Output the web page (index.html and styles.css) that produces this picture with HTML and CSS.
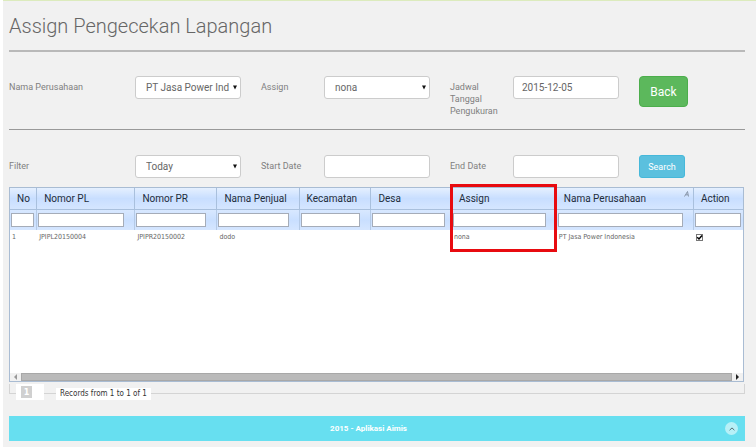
FILE: index.html
```html
<!DOCTYPE html>
<html lang="id">
<head>
<meta charset="utf-8">
<title>Assign Pengecekan Lapangan</title>
<link rel="stylesheet" href="styles.css">
</head>
<body>
<main class="page">
  <h1 class="title">Assign Pengecekan Lapangan</h1>

  <form class="fields assignment">
    <label for="company">Nama Perusahaan</label>
    <div class="select-box">
      <select class="control" id="company"><option>PT Jasa Power Ind</option></select>
      <svg class="caret" viewBox="0 0 5 5" aria-hidden="true"><path d="M0 0h5L2.500 5z"/></svg>
    </div>
    <label for="assign">Assign</label>
    <div class="select-box">
      <select class="control" id="assign"><option>nona</option></select>
      <svg class="caret" viewBox="0 0 5 5" aria-hidden="true"><path d="M0 0h5L2.500 5z"/></svg>
    </div>
    <label for="schedule">Jadwal Tanggal Pengukuran</label>
    <input class="control" id="schedule" type="text" value="2015-12-05">
    <button class="button back" type="button">Back</button>
  </form>

  <form class="fields filter">
    <label for="filter">Filter</label>
    <div class="select-box">
      <select class="control" id="filter"><option>Today</option></select>
      <svg class="caret" viewBox="0 0 5 5" aria-hidden="true"><path d="M0 0h5L2.500 5z"/></svg>
    </div>
    <label for="start">Start Date</label>
    <input class="control" id="start" type="text">
    <label for="end">End Date</label>
    <input class="control" id="end" type="text">
    <button class="button search" type="button">Search</button>
  </form>

  <section class="grid">
    <div class="grid-body">
      <table class="records">
        <colgroup>
          <col class="c-no"><col class="c-pl"><col class="c-pr"><col class="c-seller"><col class="c-district"><col class="c-village"><col class="c-assign"><col class="c-company"><col class="c-action">
        </colgroup>
        <thead>
          <tr class="heads">
            <th>No</th><th>Nomor PL</th><th>Nomor PR</th><th>Nama Penjual</th><th>Kecamatan</th><th>Desa</th>
            <th>Assign<span class="highlight"></span></th>
            <th>Nama Perusahaan<svg class="sort" viewBox="0 0 5 6" aria-hidden="true"><path d="M.5 5.500L3.500 .5l1 5M1.800 3.800H4"/></svg></th>
            <th>Action</th>
          </tr>
          <tr class="searches">
            <td><input type="text" aria-label="No"></td>
            <td><input type="text" aria-label="Nomor PL"></td>
            <td><input type="text" aria-label="Nomor PR"></td>
            <td><input type="text" aria-label="Nama Penjual"></td>
            <td><input type="text" aria-label="Kecamatan"></td>
            <td><input type="text" aria-label="Desa"></td>
            <td><input type="text" aria-label="Assign"></td>
            <td><input type="text" aria-label="Nama Perusahaan"></td>
            <td><input type="text" aria-label="Action"></td>
          </tr>
        </thead>
        <tbody>
          <tr>
            <td>1</td><td>JPIPL20150004</td><td>JPIPR20150002</td><td>dodo</td><td></td><td></td><td>nona</td><td>PT Jasa Power Indonesia</td>
            <td><label class="check"><input type="checkbox" checked aria-label="Action 1"><svg viewBox="0 0 7 7" aria-hidden="true"><path d="M1.200 3.200L3 5l3-3.500"/></svg></label></td>
          </tr>
        </tbody>
      </table>
    </div>
    <div class="scrollbar">
      <svg class="arrow dim" viewBox="0 0 3 6" aria-hidden="true"><path d="M3 0v6L0 3z"/></svg>
      <span class="thumb"></span>
      <svg class="arrow" viewBox="0 0 3 6" aria-hidden="true"><path d="M0 0v6l3-3z"/></svg>
    </div>
  </section>

  <div class="pager">
    <span class="rule start"></span>
    <span class="pages"><span class="current">1</span></span>
    <span class="rule middle"></span>
    <span class="summary">Records from 1 to 1 of 1</span>
    <span class="rule end"></span>
  </div>

  <footer class="footer">
    <span class="credit">2015 - Aplikasi Aimis</span>
    <a class="to-top" href="#" aria-label="Top"><svg viewBox="0 0 6 4"><path d="M.6 3.200L3 .9l2.400 2.300"/></svg></a>
  </footer>
</main>
</body>
</html>
```

FILE: styles.css
```css
* {
  box-sizing: border-box;
}

body {
  margin: 0;
  padding-left: 3px;
  background: #fff;
  color: #808080;
  font-family: Roboto, "Open Sans", sans-serif;
  font-size: 9px;
  line-height: 12px;
}

input,
select,
button {
  font: inherit;
  color: inherit;
}

.page {
  display: flex;
  flex-direction: column;
  min-height: 100vh;
  padding: 0 11px 6px 6px;
  border-top: 1px solid #dcebbd;
  background: #f1f1f1;
}

.title {
  margin: 0;
  padding: 11px 0 10px;
  border-bottom: 2px solid #b9b9b9;
  color: #666;
  font-size: 20px;
  font-weight: 300;
  line-height: 28px;
}

/* Form rows */
.fields {
  display: grid;
  grid-template-columns: 126fr 126fr 63fr 126fr 63fr 126fr 106fr;
  align-items: start;
}

.fields > label {
  padding: 5px 10px 0 0;
}

.assignment {
  padding: 24px 0 12px;
  border-bottom: 1px solid #999;
}

.filter {
  padding: 25px 0 9px;
}

.select-box,
.fields > input {
  margin-right: 20px;
}

.select-box {
  display: grid;
  align-items: center;
}

.select-box > * {
  grid-area: 1 / 1;
}

.control {
  width: 100%;
  height: 23px;
  padding: 0 8px;
  border: 1px solid #ccc;
  border-radius: 3px;
  background: #fff;
  color: #666;
  font-size: 10px;
}

.fields > .control {
  width: auto;
  min-width: 0;
}

select.control {
  padding: 0 10px;
  appearance: none;
}

.caret {
  justify-self: end;
  width: 4px;
  height: 5px;
  margin-right: 4px;
  fill: #111;
  pointer-events: none;
}

.button {
  justify-self: start;
  border: 1px solid;
  border-radius: 3px;
  color: #fff;
}

.back {
  width: 49px;
  height: 31px;
  border-color: #4cae4c;
  border-radius: 4px;
  background: #5cb85c;
  font-size: 12px;
}

.search {
  width: 46px;
  height: 23px;
  padding: 0;
  border-color: #46b8da;
  background: #5bc0de;
  font-size: 9px;
}

/* Record grid */
.grid {
  display: flex;
  flex: 1;
  flex-direction: column;
  margin-right: 1px;
  border: 1px solid #a9bcd3;
  background: #fff;
}

.grid-body {
  flex: 1;
}

.records {
  width: 100%;
  border-collapse: separate;
  border-spacing: 0;
  table-layout: fixed;
  font-family: "DejaVu Sans Condensed", "DejaVu Sans", sans-serif;
  font-size: 7px;
}

.c-no { width: 26px; }
.c-pl { width: 13.400%; }
.c-pr { width: 11.200%; }
.c-seller { width: 11.200%; }
.c-district { width: 9.800%; }
.c-village { width: 11%; }
.c-assign { width: 14.300%; }
.c-company { width: 18.700%; }
.c-action { width: 6.700%; }

.heads th {
  position: relative;
  height: 22px;
  padding: 0 0 0 7px;
  border-right: 1px solid #a9c0dd;
  border-bottom: 1px solid #a9c0dd;
  background: linear-gradient(#e5f0ff, #c8deff 50%, #d5e6ff);
  color: #222c3a;
  font-family: Roboto, sans-serif;
  font-size: 10px;
  font-weight: 400;
  text-align: left;
  white-space: nowrap;
}

.searches td {
  height: 20px;
  padding: 0 10px 0 1px;
  border-right: 1px solid #b5cae6;
  background: linear-gradient(#d8e8ff, #c9dfff 50%, #d5e6ff);
}

.searches td:nth-child(6) {
  padding-right: 6px;
}

.searches td:first-child,
.searches td:last-child {
  padding-right: 2px;
}

.heads th:last-child,
.searches td:last-child {
  border-right: 0;
}

.searches input {
  display: block;
  width: 100%;
  height: 14px;
  padding: 0 2px;
  border: 1px solid #a5acb8;
  background: #fff;
}

.records tbody td {
  height: 14px;
  padding: 0 0 0 2px;
  color: #666;
  line-height: 10px;
  white-space: nowrap;
}

/* Frame drawn round the Assign column */
.highlight {
  position: absolute;
  z-index: 1;
  top: -4px;
  right: -1px;
  left: -2px;
  height: 68px;
  border: 3px solid #e80b10;
}

.sort {
  position: absolute;
  top: 3px;
  right: 4px;
  width: 5px;
  height: 6px;
  fill: none;
  stroke: #8795a8;
}

.check {
  display: grid;
  width: 7px;
}

.check > * {
  grid-area: 1 / 1;
  width: 7px;
  height: 7px;
  margin: 0;
}

.check input {
  border: 1px solid #777;
  background: #fff;
  appearance: none;
}

.check svg {
  fill: none;
  stroke: #000;
  stroke-width: 1.5;
  pointer-events: none;
}

.scrollbar {
  display: flex;
  align-items: center;
  justify-content: space-between;
  height: 8px;
  gap: 4px;
  padding: 0 4px;
  background: #f1f1f1;
}

.arrow {
  width: 3px;
  height: 6px;
  fill: #222;
}

.arrow.dim {
  fill: #999;
}

.thumb {
  flex: 1;
  align-self: stretch;
  border: 1px solid #a8a8a8;
  background: #bababa;
}

/* Pager */
.pager {
  display: flex;
  align-items: flex-start;
  padding-top: 2px;
}

.rule {
  height: 10px;
  border-bottom: 1px solid #d4d4d4;
}

.rule.start {
  width: 7px;
  border-left: 1px solid #d4d4d4;
}

.rule.middle {
  width: 12px;
}

.rule.end {
  flex: 1;
  border-right: 1px solid #d4d4d4;
}

.pages {
  width: 28px;
  height: 16px;
  padding: 2px 5px;
  background: #fff;
}

.current {
  display: block;
  width: 11px;
  background: #d0d0d0;
  color: #fff;
  font-family: "DejaVu Sans Condensed", sans-serif;
  font-weight: 700;
  text-align: center;
}

.summary {
  height: 12px;
  margin-top: 4px;
  padding: 0 4px;
  background: #fff;
  color: #333;
  font-family: "DejaVu Sans Condensed", sans-serif;
  font-size: 8px;
}

.footer {
  display: flex;
  align-items: center;
  gap: 4px;
  height: 25px;
  margin-top: 16px;
  padding: 0 7px;
  background: #67dff0;
  color: #fff;
}

.credit {
  flex: 1;
  font-size: 8px;
  font-weight: 700;
  text-align: center;
}

.to-top {
  display: flex;
  align-items: center;
  justify-content: center;
  width: 13px;
  height: 13px;
  border-radius: 50%;
  background: #b7f0f7;
}

.to-top svg {
  width: 6px;
  height: 4px;
  fill: none;
  stroke: #526a70;
}
```
